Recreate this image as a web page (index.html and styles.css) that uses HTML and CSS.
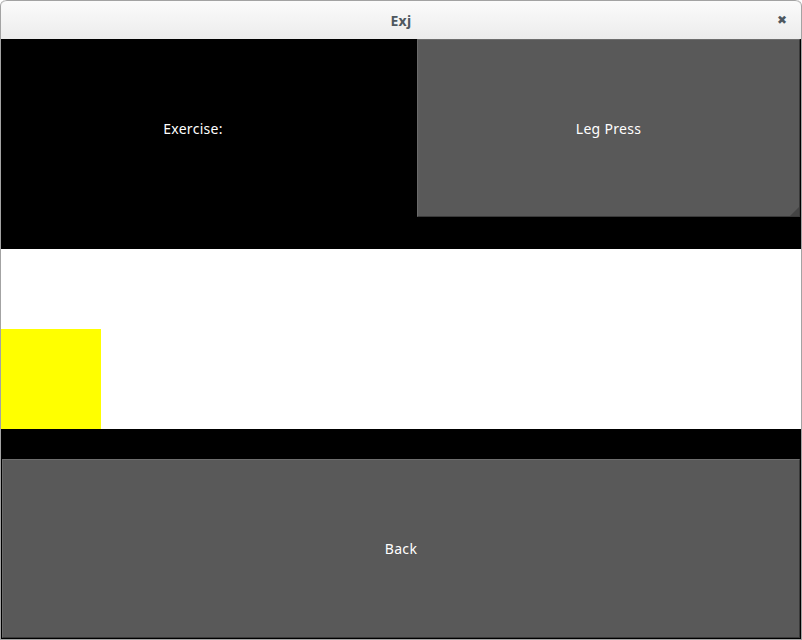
FILE: index.html
```html
<!DOCTYPE html>
<html>
<head>
<meta charset="utf-8">
<link rel="stylesheet" href="styles.css">
</head>
<body>
<div class="window">
  <div class="titlebar">
    <span class="title">Exj</span>
    <span class="close">&#x2716;</span>
  </div>
  <div class="content">
    <div class="top">
      <div class="label">Exercise:</div>
      <div class="btn leg">Leg Press<span class="grip"></span></div>
    </div>
    <div class="white">
      <div class="yellow"></div>
    </div>
    <div class="spacer"></div>
    <div class="bottom">
      <div class="btn back">Back</div>
    </div>
  </div>
</div>
</body>
</html>
```
FILE: styles.css
```css
html, body {
  margin: 0;
  padding: 0;
  background: #ffffff;
}
body {
  font-family: "Noto Sans", "Open Sans", sans-serif;
  font-size: 14px;
}
.window {
  width: 800px;
  height: 639px;
  border: 1px solid #a3a3a3;
  border-top: none;
  border-radius: 6px 6px 0 0;
  display: flex;
  flex-direction: column;
  overflow: hidden;
}
.titlebar {
  height: 38px;
  border-top: 1px solid #a3a3a3;
  border-radius: 6px 6px 0 0;
  background: linear-gradient(#fbfbfb, #ececec);
  position: relative;
  display: flex;
  align-items: center;
  justify-content: center;
  flex: none;
}
.title {
  font-weight: bold;
  color: #4e5860;
  font-size: 14px;
  letter-spacing: 0.3px;
}
.close {
  position: absolute;
  right: 14px;
  top: 12px;
  font-size: 12px;
  color: #4e5860;
  font-family: "DejaVu Sans", sans-serif;
}
.content {
  flex: 1;
  display: flex;
  flex-direction: column;
  background: #000;
  letter-spacing: 0.3px;
}
.top {
  height: 210px;
  background: #000;
  display: flex;
  align-items: flex-start;
  flex: none;
}
.label {
  width: 384px;
  height: 178px;
  display: flex;
  align-items: center;
  justify-content: center;
  color: #ffffff;
}
.btn {
  background: #595959;
  color: #ffffff;
  display: flex;
  align-items: center;
  justify-content: center;
  box-sizing: border-box;
  border-top: 1px solid #6e6e6e;
  border-left: 1px solid #6a6a6a;
  border-bottom: 1px solid #3a3a3a;
  border-right: 1px solid #3a3a3a;
  position: relative;
}
.leg {
  margin-left: 32px;
  width: 383px;
  height: 178px;
}
.grip {
  position: absolute;
  right: 0;
  bottom: 0;
  width: 0;
  height: 0;
  border-left: 9px solid transparent;
  border-bottom: 9px solid #444444;
}
.white {
  height: 180px;
  background: #ffffff;
  display: flex;
  align-items: flex-end;
  flex: none;
}
.yellow {
  width: 100px;
  height: 100px;
  background: #ffff00;
}
.spacer {
  height: 30px;
  background: #000;
  flex: none;
}
.bottom {
  height: 180px;
  background: #000;
  padding: 0 1px 1px 1px;
  box-sizing: border-box;
  display: flex;
  flex: none;
}
.back {
  flex: 1;
}
```
